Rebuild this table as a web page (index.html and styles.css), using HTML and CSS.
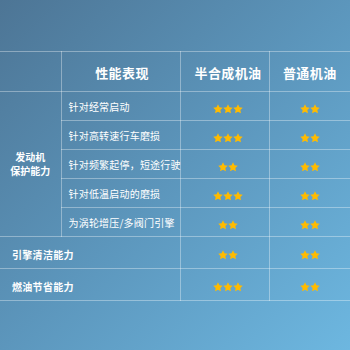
FILE: index.html
```html
<!DOCTYPE html>
<html lang="zh">
<head>
<meta charset="utf-8">
<link rel="stylesheet" href="styles.css">
</head>
<body>
<div class="page">
  <table class="cmp">
    <colgroup>
      <col class="c1"><col class="c2"><col class="c3"><col class="c4">
    </colgroup>
    <tr class="head">
      <td class="blank"></td>
      <td class="h h2">性能表现</td>
      <td class="h h3">半合成机油</td>
      <td class="h h4">普通机油</td>
    </tr>
    <tr>
      <td class="group" rowspan="5">发动机<br>保护能力</td>
      <td class="sub">针对经常启动</td>
      <td class="s3"><span class="stars"><svg viewBox="0 0 10 10"><polygon points="5,0.3 6.47,3.28 9.76,3.76 7.38,6.07 7.94,9.35 5,7.8 2.06,9.35 2.62,6.07 0.24,3.76 3.53,3.28"/></svg><svg viewBox="0 0 10 10"><polygon points="5,0.3 6.47,3.28 9.76,3.76 7.38,6.07 7.94,9.35 5,7.8 2.06,9.35 2.62,6.07 0.24,3.76 3.53,3.28"/></svg><svg viewBox="0 0 10 10"><polygon points="5,0.3 6.47,3.28 9.76,3.76 7.38,6.07 7.94,9.35 5,7.8 2.06,9.35 2.62,6.07 0.24,3.76 3.53,3.28"/></svg></span></td>
      <td class="s4"><span class="stars"><svg viewBox="0 0 10 10"><polygon points="5,0.3 6.47,3.28 9.76,3.76 7.38,6.07 7.94,9.35 5,7.8 2.06,9.35 2.62,6.07 0.24,3.76 3.53,3.28"/></svg><svg viewBox="0 0 10 10"><polygon points="5,0.3 6.47,3.28 9.76,3.76 7.38,6.07 7.94,9.35 5,7.8 2.06,9.35 2.62,6.07 0.24,3.76 3.53,3.28"/></svg></span></td>
    </tr>
    <tr>
      <td class="sub">针对高转速行车磨损</td>
      <td class="s3"><span class="stars"><svg viewBox="0 0 10 10"><polygon points="5,0.3 6.47,3.28 9.76,3.76 7.38,6.07 7.94,9.35 5,7.8 2.06,9.35 2.62,6.07 0.24,3.76 3.53,3.28"/></svg><svg viewBox="0 0 10 10"><polygon points="5,0.3 6.47,3.28 9.76,3.76 7.38,6.07 7.94,9.35 5,7.8 2.06,9.35 2.62,6.07 0.24,3.76 3.53,3.28"/></svg><svg viewBox="0 0 10 10"><polygon points="5,0.3 6.47,3.28 9.76,3.76 7.38,6.07 7.94,9.35 5,7.8 2.06,9.35 2.62,6.07 0.24,3.76 3.53,3.28"/></svg></span></td>
      <td class="s4"><span class="stars"><svg viewBox="0 0 10 10"><polygon points="5,0.3 6.47,3.28 9.76,3.76 7.38,6.07 7.94,9.35 5,7.8 2.06,9.35 2.62,6.07 0.24,3.76 3.53,3.28"/></svg><svg viewBox="0 0 10 10"><polygon points="5,0.3 6.47,3.28 9.76,3.76 7.38,6.07 7.94,9.35 5,7.8 2.06,9.35 2.62,6.07 0.24,3.76 3.53,3.28"/></svg></span></td>
    </tr>
    <tr>
      <td class="sub">针对频繁起停，短途行驶</td>
      <td class="s3"><span class="stars"><svg viewBox="0 0 10 10"><polygon points="5,0.3 6.47,3.28 9.76,3.76 7.38,6.07 7.94,9.35 5,7.8 2.06,9.35 2.62,6.07 0.24,3.76 3.53,3.28"/></svg><svg viewBox="0 0 10 10"><polygon points="5,0.3 6.47,3.28 9.76,3.76 7.38,6.07 7.94,9.35 5,7.8 2.06,9.35 2.62,6.07 0.24,3.76 3.53,3.28"/></svg></span></td>
      <td class="s4"><span class="stars"><svg viewBox="0 0 10 10"><polygon points="5,0.3 6.47,3.28 9.76,3.76 7.38,6.07 7.94,9.35 5,7.8 2.06,9.35 2.62,6.07 0.24,3.76 3.53,3.28"/></svg><svg viewBox="0 0 10 10"><polygon points="5,0.3 6.47,3.28 9.76,3.76 7.38,6.07 7.94,9.35 5,7.8 2.06,9.35 2.62,6.07 0.24,3.76 3.53,3.28"/></svg></span></td>
    </tr>
    <tr>
      <td class="sub">针对低温启动的磨损</td>
      <td class="s3"><span class="stars"><svg viewBox="0 0 10 10"><polygon points="5,0.3 6.47,3.28 9.76,3.76 7.38,6.07 7.94,9.35 5,7.8 2.06,9.35 2.62,6.07 0.24,3.76 3.53,3.28"/></svg><svg viewBox="0 0 10 10"><polygon points="5,0.3 6.47,3.28 9.76,3.76 7.38,6.07 7.94,9.35 5,7.8 2.06,9.35 2.62,6.07 0.24,3.76 3.53,3.28"/></svg><svg viewBox="0 0 10 10"><polygon points="5,0.3 6.47,3.28 9.76,3.76 7.38,6.07 7.94,9.35 5,7.8 2.06,9.35 2.62,6.07 0.24,3.76 3.53,3.28"/></svg></span></td>
      <td class="s4"><span class="stars"><svg viewBox="0 0 10 10"><polygon points="5,0.3 6.47,3.28 9.76,3.76 7.38,6.07 7.94,9.35 5,7.8 2.06,9.35 2.62,6.07 0.24,3.76 3.53,3.28"/></svg><svg viewBox="0 0 10 10"><polygon points="5,0.3 6.47,3.28 9.76,3.76 7.38,6.07 7.94,9.35 5,7.8 2.06,9.35 2.62,6.07 0.24,3.76 3.53,3.28"/></svg></span></td>
    </tr>
    <tr>
      <td class="sub">为涡轮增压/多阀门引擎</td>
      <td class="s3"><span class="stars"><svg viewBox="0 0 10 10"><polygon points="5,0.3 6.47,3.28 9.76,3.76 7.38,6.07 7.94,9.35 5,7.8 2.06,9.35 2.62,6.07 0.24,3.76 3.53,3.28"/></svg><svg viewBox="0 0 10 10"><polygon points="5,0.3 6.47,3.28 9.76,3.76 7.38,6.07 7.94,9.35 5,7.8 2.06,9.35 2.62,6.07 0.24,3.76 3.53,3.28"/></svg></span></td>
      <td class="s4"><span class="stars"><svg viewBox="0 0 10 10"><polygon points="5,0.3 6.47,3.28 9.76,3.76 7.38,6.07 7.94,9.35 5,7.8 2.06,9.35 2.62,6.07 0.24,3.76 3.53,3.28"/></svg><svg viewBox="0 0 10 10"><polygon points="5,0.3 6.47,3.28 9.76,3.76 7.38,6.07 7.94,9.35 5,7.8 2.06,9.35 2.62,6.07 0.24,3.76 3.53,3.28"/></svg></span></td>
    </tr>
    <tr>
      <td class="wide" colspan="2">引擎清洁能力</td>
      <td class="s3"><span class="stars"><svg viewBox="0 0 10 10"><polygon points="5,0.3 6.47,3.28 9.76,3.76 7.38,6.07 7.94,9.35 5,7.8 2.06,9.35 2.62,6.07 0.24,3.76 3.53,3.28"/></svg><svg viewBox="0 0 10 10"><polygon points="5,0.3 6.47,3.28 9.76,3.76 7.38,6.07 7.94,9.35 5,7.8 2.06,9.35 2.62,6.07 0.24,3.76 3.53,3.28"/></svg></span></td>
      <td class="s4"><span class="stars"><svg viewBox="0 0 10 10"><polygon points="5,0.3 6.47,3.28 9.76,3.76 7.38,6.07 7.94,9.35 5,7.8 2.06,9.35 2.62,6.07 0.24,3.76 3.53,3.28"/></svg><svg viewBox="0 0 10 10"><polygon points="5,0.3 6.47,3.28 9.76,3.76 7.38,6.07 7.94,9.35 5,7.8 2.06,9.35 2.62,6.07 0.24,3.76 3.53,3.28"/></svg></span></td>
    </tr>
    <tr>
      <td class="wide" colspan="2">燃油节省能力</td>
      <td class="s3"><span class="stars"><svg viewBox="0 0 10 10"><polygon points="5,0.3 6.47,3.28 9.76,3.76 7.38,6.07 7.94,9.35 5,7.8 2.06,9.35 2.62,6.07 0.24,3.76 3.53,3.28"/></svg><svg viewBox="0 0 10 10"><polygon points="5,0.3 6.47,3.28 9.76,3.76 7.38,6.07 7.94,9.35 5,7.8 2.06,9.35 2.62,6.07 0.24,3.76 3.53,3.28"/></svg><svg viewBox="0 0 10 10"><polygon points="5,0.3 6.47,3.28 9.76,3.76 7.38,6.07 7.94,9.35 5,7.8 2.06,9.35 2.62,6.07 0.24,3.76 3.53,3.28"/></svg></span></td>
      <td class="s4"><span class="stars"><svg viewBox="0 0 10 10"><polygon points="5,0.3 6.47,3.28 9.76,3.76 7.38,6.07 7.94,9.35 5,7.8 2.06,9.35 2.62,6.07 0.24,3.76 3.53,3.28"/></svg><svg viewBox="0 0 10 10"><polygon points="5,0.3 6.47,3.28 9.76,3.76 7.38,6.07 7.94,9.35 5,7.8 2.06,9.35 2.62,6.07 0.24,3.76 3.53,3.28"/></svg></span></td>
    </tr>
  </table>
</div>
</body>
</html>
```
FILE: styles.css
```css
html, body {
  margin: 0;
  padding: 0;
}
body {
  width: 350px;
  height: 350px;
  overflow: hidden;
  background: linear-gradient(135deg, #4d7595 0%, #5c96bc 50%, #6db7e0 100%);
  font-family: "Noto Sans CJK SC", "Noto Sans", sans-serif;
  color: #fff;
}
.page {
  padding-top: 51px;
}
.cmp {
  width: 350px;
  table-layout: fixed;
  border-collapse: collapse;
}
.c1 { width: 61px; }
.c2 { width: 119px; }
.c3 { width: 89px; }
.c4 { width: 81px; }
.cmp td {
  border: 1px solid rgba(255, 255, 255, 0.35);
  padding: 0;
  height: 28px;
  vertical-align: middle;
}
.cmp td:first-child { border-left: none; }
.cmp td:last-child { border-right: none; }
.cmp .head td { height: 37px; }
.cmp .h {
  font-size: 13px;
  font-weight: 700;
  text-align: center;
  letter-spacing: 0.4px;
  padding-top: 2px;
}
.cmp .h2 { padding-left: 3px; }
.cmp .h3 { padding-left: 7px; }
.cmp .sub {
  font-size: 10px;
  padding-left: 7px;
  white-space: nowrap;
  letter-spacing: 0.2px;
}
.cmp .group {
  font-size: 10px;
  font-weight: 700;
  line-height: 14px;
  text-align: center;
}
.cmp .wide {
  font-size: 10px;
  font-weight: 700;
  padding-left: 12px;
  padding-top: 3px;
  letter-spacing: 0.3px;
}
.cmp .s3, .cmp .s4 { text-align: center; }
.cmp .s3 { padding-left: 7px; }
.stars {
  display: inline-flex;
  gap: 0;
  vertical-align: middle;
}
.stars svg {
  width: 10px;
  height: 10px;
  fill: #ffbb00;
  display: block;
}
```
